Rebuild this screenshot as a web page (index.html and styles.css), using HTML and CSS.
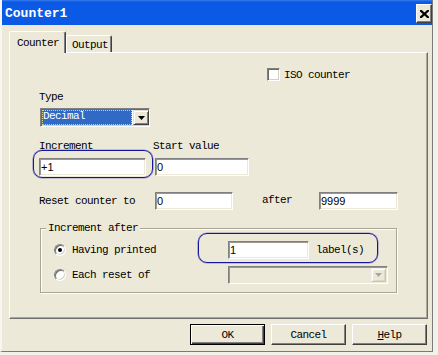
FILE: index.html
```html
<!DOCTYPE html>
<html>
<head>
<meta charset="utf-8">
<title>Counter1</title>
<link rel="stylesheet" href="styles.css">
</head>
<body>
<div class="window">
  <div class="titlebar">
    <span class="title">Counter1</span>
    <span class="close"><svg width="9" height="8" viewBox="0 0 9 8"><path d="M1 0.8 L8 7.2 M8 0.8 L1 7.2" stroke="#000" stroke-width="2.2" stroke-linecap="square"/></svg></span>
  </div>
  <div class="tabs">
    <div class="tab active">Counter</div>
    <div class="tab">Output</div>
  </div>
  <div class="panel">
    <div class="row iso"><span class="check"></span><span>ISO counter</span></div>
    <div class="lbl type-lbl">Type</div>
    <div class="select"><span class="hl">Decimal</span><span class="arrow-btn"><svg width="7" height="4" viewBox="0 0 7 4"><polygon points="0,0 7,0 3.5,4" fill="#000"/></svg></span></div>
    <div class="row labels"><span class="col1">Increment</span><span>Start value</span></div>
    <div class="row inputs"><span class="field f-inc">+1</span><span class="field f-start">0</span></div>
    <div class="row reset"><span class="col-reset">Reset counter to</span><span class="field f-reset">0</span><span class="after">after</span><span class="field f-after">9999</span></div>
    <div class="group">
      <span class="legend">Increment after</span>
      <div class="grow"><span class="opt"><span class="radio on"></span>Having printed</span><span class="field f-count">1</span><span class="unit">label(s)</span></div>
      <div class="grow second"><span class="opt"><span class="radio"></span>Each reset of</span><span class="combo-dis"><span class="arrow-btn dis"><svg width="7" height="4" viewBox="0 0 7 4"><polygon points="0,0 7,0 3.5,4" fill="#aca899"/></svg></span></span></div>
    </div>
  </div>
  <div class="buttons">
    <span class="btn default">OK</span>
    <span class="btn">Cancel</span>
    <span class="btn"><u>H</u>elp</span>
  </div>
  <div class="mark m1"></div>
  <div class="mark m2"></div>
</div>
</body>
</html>
```

FILE: styles.css
```css
* { box-sizing: border-box; }
html, body { margin: 0; padding: 0; }
body {
  width: 438px;
  height: 355px;
  overflow: hidden;
  background: #f2f1ea;
  font-family: "Liberation Mono", "DejaVu Sans Mono", monospace;
  font-size: 11px;
  letter-spacing: -0.6px;
  color: #000;
}
.window {
  position: relative;
  width: 433px;
  height: 352px;
  background: #ece9d8;
  border-left: 2px solid #f7f6f0;
  border-right: 1px solid #7a7a7a;
  border-bottom: 1px solid #7a7a7a;
  display: flex;
  flex-direction: column;
}
.titlebar {
  height: 25px;
  flex: none;
  display: flex;
  align-items: flex-start;
  background: linear-gradient(#3b7cec 0, #0b5ae5 2px, #0b5ae5 100%);
}
.title {
  margin: 6px 0 0 3px;
  line-height: 16px;
  font-size: 13px;
  font-weight: bold;
  letter-spacing: 0;
  color: #fff;
}
.close {
  margin: 4px 0 0 auto;
  width: 16px;
  height: 19px;
  display: flex;
  align-items: center;
  justify-content: center;
  background: #ece9d8;
  border: 1px solid;
  border-color: #fff #404040 #404040 #fff;
  box-shadow: inset -1px -1px #808080;
}
.tabs {
  position: relative;
  z-index: 1;
  display: flex;
  align-items: flex-end;
  height: 22px;
  margin: 6px 0 0 7px;
}
.tab {
  background: #ece9d8;
  line-height: 12px;
  border-top: 1px solid #fff;
  border-left: 1px solid #fff;
  border-right: 1px solid #404040;
  box-shadow: inset -1px 0 #808080;
  border-top-left-radius: 2px;
  border-top-right-radius: 2px;
}
.tab.active {
  width: 57px;
  height: 22px;
  padding: 5px 0 0 7px;
}
.tab:not(.active) {
  width: 46px;
  height: 17px;
  margin-bottom: 1px;
  padding: 3px 0 0 5px;
}
.panel {
  margin: -1px 0 0 7px;
  width: 419px;
  height: 267px;
  flex: none;
  background: #ece9d8;
  border: 1px solid;
  border-color: #fff #6f6f6f #6f6f6f #fff;
  box-shadow: inset -1px -1px #aca899;
}
.row { display: flex; align-items: center; }
.iso { margin: 15px 0 0 257px; height: 13px; }
.check {
  width: 13px;
  height: 13px;
  margin-right: 4px;
  background: #fff;
  border: 1px solid;
  border-color: #808080 #fff #fff #808080;
  box-shadow: inset 1px 1px #6a6a6a, inset -1px -1px #d4d0c8;
}
.lbl { height: 12px; line-height: 12px; }
.type-lbl { margin: 10px 0 0 29px; }
.select {
  margin: 5px 0 0 30px;
  width: 110px;
  height: 19px;
  display: flex;
  gap: 1px;
  padding: 1px 0 1px 1px;
  background: #fff;
  border: 1px solid;
  border-color: #808080 #fff #fff #808080;
  box-shadow: inset 1px 1px #6a6a6a, inset -1px -1px #d4d0c8;
}
.hl {
  width: 90px;
  height: 15px;
  line-height: 13px;
  padding-left: 1px;
  background: #316ac5;
  color: #fff;
  outline: 1px dotted #d8d090;
  outline-offset: -1px;
}
.arrow-btn {
  width: 16px;
  height: 15px;
  display: flex;
  align-items: center;
  justify-content: center;
  background: #ece9d8;
  border: 1px solid;
  border-color: #e4e2d6 #404040 #404040 #e4e2d6;
  box-shadow: inset 1px 1px #fff, inset -1px -1px #808080;
}
.arrow-btn.dis {
  width: 15px;
  height: 14px;
  border-color: #f4f3ee #c8c5b4 #c8c5b4 #f4f3ee;
  box-shadow: inset 1px 1px #fff, inset -1px -1px #dcd9c8;
}
.labels { margin: 13px 0 0 29px; height: 12px; line-height: 12px; }
.col1 { width: 114px; }
.inputs { margin: 6px 0 0 29px; height: 18px; }
.field {
  height: 18px;
  line-height: 16px;
  padding-left: 1px;
  background: #fff;
  font-family: "Liberation Sans", Arial, sans-serif;
  font-size: 11px;
  letter-spacing: 0;
  border: 1px solid;
  border-color: #808080 #fff #fff #808080;
  box-shadow: inset 1px 1px #9a988e, inset -1px -1px #ece9d8;
}
.f-inc { width: 107px; }
.f-start { width: 94px; margin-left: 9px; }
.reset { margin: 16px 0 0 29px; height: 18px; }
.col-reset { width: 116px; }
.f-reset { width: 78px; }
.after { margin-left: 29px; width: 30px; margin-top: -2px; }
.f-after { width: 79px; margin-left: 27px; }
.group {
  position: relative;
  margin: 18px 0 0 30px;
  width: 357px;
  height: 65px;
  padding-top: 12px;
  border: 1px solid #a7a596;
  box-shadow: inset 1px 1px #fff, 1px 1px #fff;
}
.legend {
  position: absolute;
  top: -7px;
  left: 5px;
  padding: 0 2px;
  line-height: 12px;
  background: #ece9d8;
}
.grow {
  display: flex;
  align-items: center;
  height: 18px;
  margin-left: 13px;
}
.grow.second { margin-top: 7px; }
.opt {
  width: 174px;
  display: flex;
  align-items: center;
}
.radio {
  width: 12px;
  height: 12px;
  margin-right: 6px;
  border-radius: 50%;
  background: #fff;
  border: 1px solid;
  border-color: #808080 #fff #fff #808080;
  box-shadow: inset 1px 1px #6a6a6a, inset -1px -1px #d4d0c8;
  display: flex;
  align-items: center;
  justify-content: center;
}
.radio.on::after {
  content: "";
  width: 4px;
  height: 4px;
  border-radius: 50%;
  background: #000;
}
.f-count { width: 81px; }
.unit { margin-left: 7px; }
.combo-dis {
  width: 160px;
  height: 18px;
  display: flex;
  justify-content: flex-end;
  align-items: center;
  padding-right: 1px;
  background: #ece9d8;
  border: 1px solid;
  border-color: #808080 #fff #fff #808080;
  box-shadow: inset 1px 1px #9a988e, inset -1px -1px #ece9d8;
}
.buttons {
  display: flex;
  justify-content: flex-end;
  gap: 6px;
  margin: 5px 5px 0 0;
}
.btn {
  width: 75px;
  height: 21px;
  display: flex;
  align-items: center;
  justify-content: center;
  background: #ece9d8;
  border: 1px solid;
  border-color: #fff #404040 #404040 #fff;
  box-shadow: inset -1px -1px #808080;
}
.btn.default {
  width: 75px;
  border: 1px solid #000;
  box-shadow: inset 1px 1px #fff, inset -1px -1px #404040, inset -2px -2px #808080;
}
.btn u { text-decoration: underline; text-underline-offset: 1px; }
.mark {
  position: absolute;
  border: 1px solid #16169c;
  border-radius: 9px;
  box-shadow: 0 0 0 0.6px rgba(30, 30, 170, 0.45);
}
.m1 { left: 31px; top: 150px; width: 120px; height: 28px; }
.m2 { left: 196px; top: 233px; width: 180px; height: 30px; }
```
